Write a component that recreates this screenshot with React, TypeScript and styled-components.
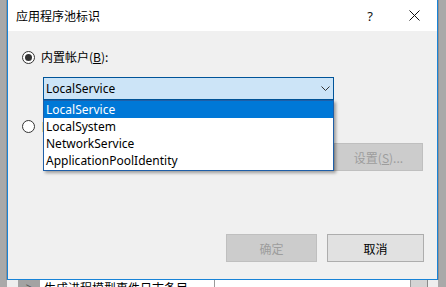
import styled, { createGlobalStyle } from "styled-components";

const GlobalStyle = createGlobalStyle`
  html, body {
    margin: 0;
    padding: 0;
    overflow: hidden;
  }
  body {
    font-family: "Noto Sans", "Noto Sans CJK SC", sans-serif;
    font-size: 12px;
    color: #000;
  }
`;

const UI_FONT = `"Noto Sans", "Noto Sans CJK SC", sans-serif`;

// desktop behind the dialog
const Desktop = styled.div`
  width: 446px;
  height: 287px;
  overflow: hidden;
  background: #a9a9a9;
  display: flex;
  flex-direction: column;
`;

const Dialog = styled.div`
  flex: none;
  margin-left: 7px;
  width: 431px;
  height: 280px;
  box-sizing: border-box;
  border: 1px solid #1883d7;
  border-top: none;
  background: #f0f0f0;
  box-shadow: -1px 0 0 #8f8f8f, 1px 0 0 #8f8f8f;
  display: flex;
  flex-direction: column;
`;

const TitleBar = styled.div`
  height: 31px;
  flex: none;
  background: #fff;
  display: flex;
  align-items: center;
`;

const Title = styled.div`
  flex: 1;
  padding-left: 8px;
  font-family: "Noto Sans CJK SC", sans-serif;
  font-size: 12px;
  line-height: 31px;
`;

const CaptionButton = styled.div<{ $w: number }>`
  width: ${(p) => p.$w}px;
  height: 31px;
  display: flex;
  align-items: center;
  justify-content: center;
  font-family: ${UI_FONT};
  font-size: 13px;
  color: #111;
`;

const Body = styled.div`
  flex: 1;
  display: flex;
  flex-direction: column;
  padding: 18px 13px 17px 14px;
`;

const RadioRow = styled.div<{ $gap: number }>`
  display: flex;
  align-items: center;
  height: 16px;
  margin-top: ${(p) => p.$gap}px;
  gap: 6px;
`;

const Radio = styled.span<{ $checked?: boolean }>`
  width: 13px;
  height: 13px;
  box-sizing: border-box;
  border: 1px solid #333;
  border-radius: 50%;
  background: #fff;
  display: flex;
  align-items: center;
  justify-content: center;
  &::after {
    content: "";
    width: 7px;
    height: 7px;
    border-radius: 50%;
    background: ${(p) => (p.$checked ? "#333" : "transparent")};
  }
`;

const Label = styled.span`
  font-family: "Noto Sans CJK SC", sans-serif;
  font-size: 12px;
  line-height: 16px;
`;

const Combo = styled.div`
  position: relative;
  margin: 12px 0 0 21px;
  width: 291px;
  height: 23px;
  box-sizing: border-box;
  border: 1px solid #005499;
  background: #cce4f7;
  display: flex;
  align-items: center;
  padding: 0 3px 0 2px;
  z-index: 2;
`;

const ComboText = styled.span`
  flex: 1;
  font-family: ${UI_FONT};
  font-size: 12px;
`;

const DropList = styled.div`
  position: absolute;
  top: 22px;
  left: -1px;
  width: 291px;
  height: 71px;
  box-sizing: border-box;
  border: 1px solid #1f5fa8;
  background: #fff;
  box-shadow: 2px 2px 3px rgba(0, 0, 0, 0.35);
`;

const DropItem = styled.div<{ $active?: boolean }>`
  height: 17px;
  line-height: 17px;
  padding-left: 2px;
  font-family: ${UI_FONT};
  font-size: 12px;
  background: ${(p) => (p.$active ? "#0078d7" : "transparent")};
  color: ${(p) => (p.$active ? "#fff" : "#000")};
`;

const Button = styled.div<{ $w: number; $disabled?: boolean }>`
  width: ${(p) => p.$w}px;
  height: 28px;
  box-sizing: border-box;
  border: 1px solid ${(p) => (p.$disabled ? "#bfbfbf" : "#adadad")};
  background: ${(p) => (p.$disabled ? "#cccccc" : "#e1e1e1")};
  color: ${(p) => (p.$disabled ? "#9d9d9d" : "#000")};
  font-family: "Noto Sans CJK SC", sans-serif;
  font-size: 12px;
  display: flex;
  align-items: center;
  justify-content: center;
`;

const SettingsRow = styled.div`
  display: flex;
  justify-content: flex-end;
  margin: 9px 1px 0 0;
`;

const Footer = styled.div`
  margin-top: auto;
  display: flex;
  justify-content: flex-end;
  gap: 10px;
`;

// the list row of the window underneath
const BackRow = styled.div`
  flex: none;
  height: 20px;
  margin-left: 7px;
  width: 431px;
  display: flex;
  background: #eeeeee;
`;

const Expander = styled.div`
  margin-left: 11px;
  width: 22px;
  background: #a3a3a3;
  color: #555;
  font-size: 11px;
  text-align: center;
  line-height: 14px;
`;

const Cell = styled.div<{ $w: number }>`
  width: ${(p) => p.$w}px;
  background: #fff;
  border-right: 1px solid #9a9a9a;
  font-family: "Noto Sans CJK SC", sans-serif;
  font-size: 12px;
  line-height: 16px;
  padding-left: 4px;
  box-sizing: border-box;
  white-space: nowrap;
  overflow: hidden;
`;

const DropButton = styled.div`
  width: 16px;
  background: #d4d4d4;
  border-right: 1px solid #8a8a8a;
`;

export default function App() {
  const accounts = ["LocalService", "LocalSystem", "NetworkService", "ApplicationPoolIdentity"];

  return (
    <>
      <GlobalStyle />
      <Desktop>
        <Dialog>
          <TitleBar>
            <Title>应用程序池标识</Title>
            <CaptionButton $w={44}>?</CaptionButton>
            <CaptionButton $w={45}>
              <svg width="11" height="11" viewBox="0 0 11 11">
                <path d="M0.5 0.5 L10.5 10.5 M10.5 0.5 L0.5 10.5" stroke="#111" strokeWidth="1" />
              </svg>
            </CaptionButton>
          </TitleBar>

          <Body>
            <RadioRow $gap={0}>
              <Radio $checked />
              <Label>内置帐户(<u>B</u>):</Label>
            </RadioRow>

            {/* open combobox with its list */}
            <Combo>
              <ComboText>LocalService</ComboText>
              <svg width="9" height="5" viewBox="0 0 9 5">
                <path d="M0.5 0.5 L4.5 4.5 L8.5 0.5" fill="none" stroke="#333" strokeWidth="1" />
              </svg>
              <DropList>
                {accounts.map((a, i) => (
                  <DropItem key={a} $active={i === 0}>
                    {a}
                  </DropItem>
                ))}
              </DropList>
            </Combo>

            <RadioRow $gap={18}>
              <Radio />
              <Label>自定义帐户(<u>C</u>):</Label>
            </RadioRow>

            <SettingsRow>
              <Button $w={89} $disabled>
                设置(<u>S</u>)...
              </Button>
            </SettingsRow>

            <Footer>
              <Button $w={91} $disabled>
                确定
              </Button>
              <Button $w={97}>取消</Button>
            </Footer>
          </Body>
        </Dialog>

        <BackRow>
          <Expander>&gt;</Expander>
          <Cell $w={175}>生成进程模型事件日志条目</Cell>
          <Cell $w={196} />
          <DropButton />
        </BackRow>
      </Desktop>
    </>
  );
}
